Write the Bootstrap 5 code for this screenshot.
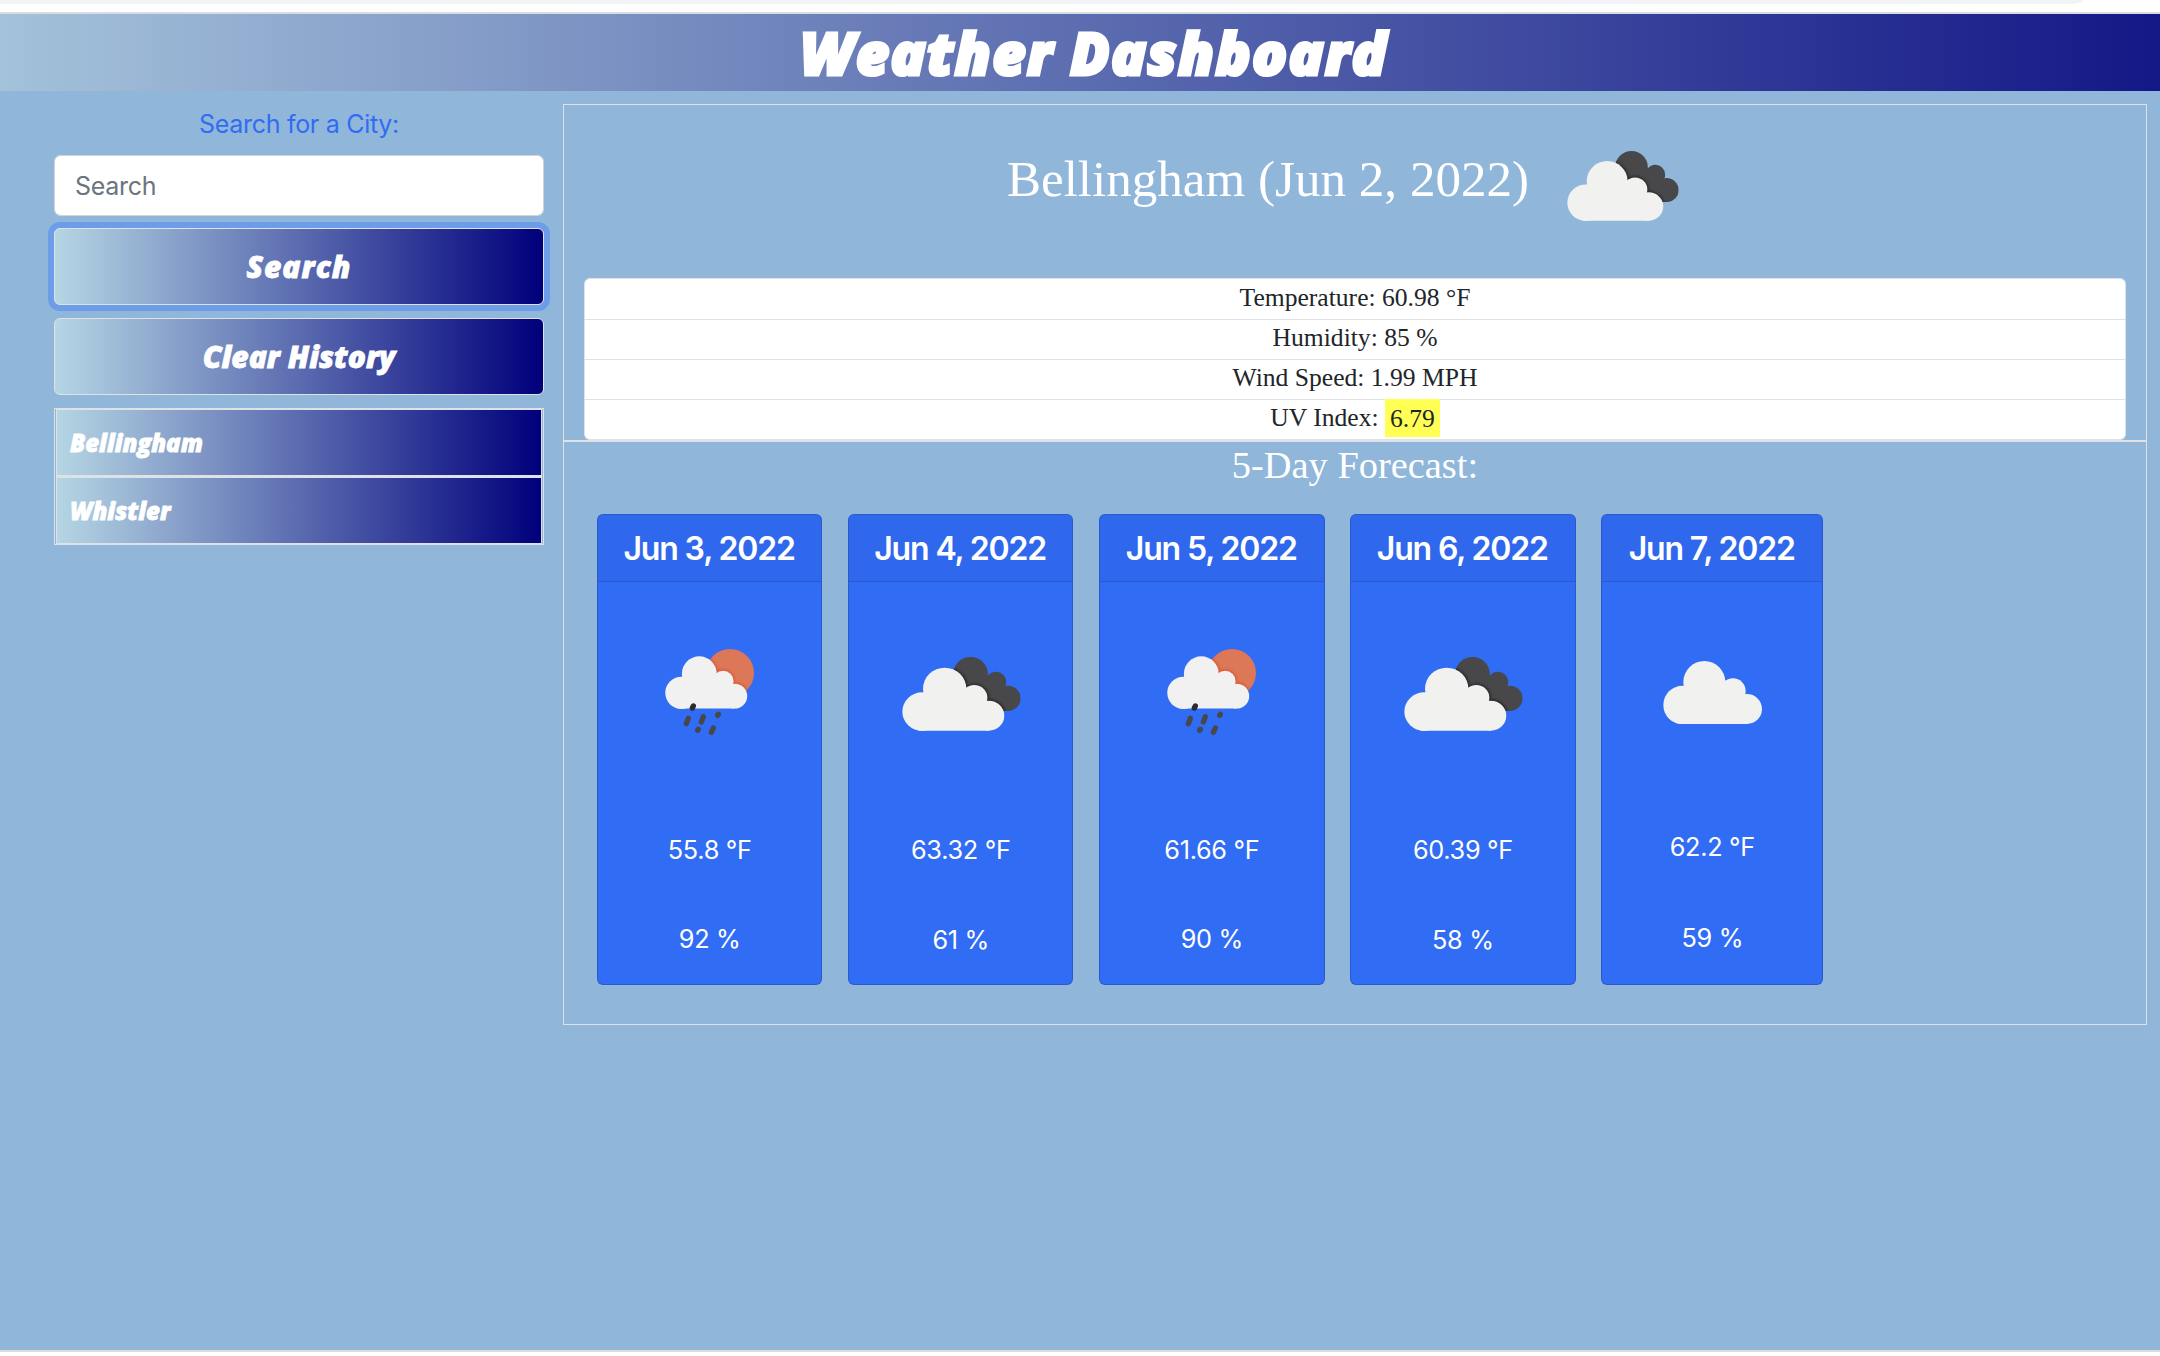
<!DOCTYPE html>
<html lang="en">
<head>
<meta charset="utf-8">
<title>Weather Dashboard</title>
<link href="https://cdn.jsdelivr.net/npm/bootstrap@5.3.0/dist/css/bootstrap.min.css" rel="stylesheet">
<style>
  :root { --edge: #dee2e6; --sky: #90b6da; --blue: #316cf4; }
  body { font-family: Inter, "Liberation Sans", sans-serif; background: #fff; height: 1356px; overflow: hidden; }
  .strip { height: 14px; border-bottom: 2px solid #dadce0; }
  .strip div { width: 2083px; height: 4px; background: #f1f3f4; border-bottom-right-radius: 14px 4px; }
  .page { height: 1338px; background: var(--sky); border-bottom: 2px solid #dadce0; }
  .racing { font-family: "Open Sans", "Liberation Sans", sans-serif; font-weight: 800; font-style: italic; color: #fff; -webkit-text-stroke: .8px #fff; }
  .banner { height: 77px; padding-left: 28px; background: linear-gradient(90deg, #b5d6e4 -12%, #00007b 114%); }
  .banner h1 { font-size: 58px; line-height: 77px; font-weight: 800; letter-spacing: 1.3px; -webkit-text-stroke: 3px #fff; }
  .side { width: 490px; margin-left: 54px; }
  .side label { font-size: 25px; line-height: 30px; letter-spacing: -.3px; color: var(--blue); margin: 18px 0 16px; }
  .side .form-control { height: 61px; padding: 0 20px; font-size: 25px; letter-spacing: -.3px; border-color: #ced4da; border-radius: 6px; }
  .side .form-control::placeholder { color: #6c757d; }
  .fade-btn { height: 77px; border: 1px solid var(--edge); border-radius: 6px; font-size: 30px; line-height: 74px; padding: 0; background: linear-gradient(90deg, #b5d6e4, #00007b); }
  .ring { box-shadow: 0 0 0 6px #6d9de9; letter-spacing: 1px; }
  .history { border: 1px solid var(--edge); padding: 0 1px 1px; border-radius: 0; height: 137px; }
  .history .list-group-item { height: 67px; line-height: 65px; padding: 0 0 0 13px; font-size: 24px; border: 1px solid var(--edge); background: linear-gradient(90deg, #b5d6e4, #00007b); }
  .history .list-group-item + .list-group-item { border-top-width: 2px; height: 68px; }
  .panel { width: 1584px; height: 921px; margin: 13px 0 0 19px; border: 1px solid var(--edge); }
  .serif { font-family: "Liberation Serif", serif; }
  .now { height: 335px; padding: 0 20px; }
  .now h2 { font-size: 51.1px; line-height: 60px; padding-top: 44px; }
  .city { height: 173px; padding-right: 24px; }
  .city svg { margin: 46px 0 0 38px; }
  .facts { border-radius: 6px; }
  .facts .list-group-item { height: 40px; line-height: 36px; padding: 0; font-size: 25.6px; border-color: var(--edge); color: #212529; }
  .facts .list-group-item:first-child { height: 42px; line-height: 38px; }
  .uv { background: #ffff54; display: inline-block; height: 38px; padding: 0 5px; line-height: 39px; vertical-align: top; margin-top: -1px; }
  .ahead { border-top: 2px solid var(--edge); padding: 0 33px; }
  .ahead h3 { font-size: 38.4px; line-height: 46px; margin: 0 0 26px; }
  .days { gap: 25.7px; }
  .day { width: 225.4px; height: 471px; background: var(--blue); border: 1px solid rgba(0,0,0,.16); border-radius: 6px; color: #fff; }
  .day.narrow { width: 222px; }
  .day .card-header { height: 67px; padding: 0; line-height: 68px; font-size: 32px; font-weight: 600; letter-spacing: -1.15px; text-indent: -1.2px; background: rgba(0,0,0,.03); border-bottom: 1px solid rgba(0,0,0,.14); }
  .sky-icon { height: 220px; padding-top: 67px; }
  .day:not(.wet) .sky-icon { padding-left: 1px; }
  .day p { font-size: 25.3px; line-height: 30px; letter-spacing: -.3px; margin: 0; }
  .day .temp { margin: 33px 0 60px; }
  .day.wet .temp { margin-bottom: 59px; }
  .day.narrow .temp { margin: 30px 0 61px; }
</style>
</head>
<body>
<svg width="0" height="0" class="position-absolute">
  <defs>
    <filter id="soft" x="-20%" y="-20%" width="140%" height="140%"><feGaussianBlur stdDeviation="5"/></filter>
    <g id="puff">
      <circle cx="59" cy="132" r="58"/><circle cx="124" cy="63" r="63"/><circle cx="210" cy="90" r="38"/><circle cx="252" cy="144" r="45"/>
      <path d="M59 100L124 60L210 90L252 120V189H48V100z"/>
    </g>
    <clipPath id="back"><circle cx="205" cy="52" r="52"/><circle cx="281" cy="75" r="31"/><circle cx="317" cy="124" r="38"/><path d="M200 50L281 65L317 110V162H200z"/></clipPath>
    <clipPath id="sun"><circle cx="195" cy="72" r="72"/></clipPath>
    <symbol id="clouds" viewBox="0 0 356 222" preserveAspectRatio="none">
      <g clip-path="url(#back)">
        <rect width="357" height="222" fill="#48484a"/>
        <use href="#puff" transform="translate(1 31) scale(1.03 1)" fill="#1c1c1c" stroke="#1c1c1c" stroke-width="3" filter="url(#soft)"/>
      </g>
      <use href="#puff" transform="translate(0 32) scale(1.03 1)" fill="#f1f1f0"/>
    </symbol>
    <symbol id="cloud" viewBox="0 0 297 189"><use href="#puff" fill="#f1f1f0"/></symbol>
    <symbol id="rain" viewBox="0 0 267 258">
      <g clip-path="url(#sun)">
        <rect width="267" height="258" fill="#dc7757"/>
        <use href="#puff" transform="translate(0 22) scale(.83)" fill="#dc5433" stroke="#dc5433" stroke-width="8" filter="url(#soft)"/>
      </g>
      <use href="#puff" transform="translate(0 22) scale(.83)" fill="#f1f1f2"/>
      <g stroke="#48484a" stroke-width="16" stroke-linecap="round">
        <path d="M85 171L82 177" stroke="#2c2c2e"/><path d="M70 208L64 224M115 203L109 219M160 196L158 199M100 241L98 244M145 237L139 250"/>
      </g>
    </symbol>
  </defs>
</svg>

<div class="strip"><div></div></div>
<div class="page">
  <header class="banner text-center"><h1 class="racing m-0">Weather Dashboard</h1></header>
  <main class="d-flex align-items-start">
    <aside class="side d-flex flex-column">
      <label class="text-center" for="city">Search for a City:</label>
      <input id="city" class="form-control" placeholder="Search">
      <button class="btn fade-btn ring racing" style="margin-top:12px">Search</button>
      <button class="btn fade-btn racing" style="margin-top:13px">Clear History</button>
      <ul class="list-group history" style="margin-top:13px">
        <li class="list-group-item racing">Bellingham</li>
        <li class="list-group-item racing">Whistler</li>
      </ul>
    </aside>
    <section class="panel">
      <div class="now serif">
        <div class="city d-flex justify-content-center align-items-start text-white">
          <h2 class="m-0 fw-normal">Bellingham (Jun 2, 2022)</h2>
          <svg width="112" height="70"><use href="#clouds"/></svg>
        </div>
        <ul class="list-group facts text-center">
          <li class="list-group-item">Temperature: 60.98 °F</li>
          <li class="list-group-item">Humidity: 85 %</li>
          <li class="list-group-item">Wind Speed: 1.99 MPH</li>
          <li class="list-group-item">UV Index: <span class="uv">6.79</span></li>
        </ul>
      </div>
      <div class="ahead">
        <h3 class="serif fw-normal text-white text-center">5-Day Forecast:</h3>
        <div class="days d-flex">
          <div class="card day wet text-center"><div class="card-header">Jun 3, 2022</div><div class="sky-icon"><svg width="89" height="86"><use href="#rain"/></svg></div><p class="temp">55.8 °F</p><p>92 %</p></div>
          <div class="card day text-center"><div class="card-header">Jun 4, 2022</div><div class="sky-icon"><svg class="mt-2" width="119" height="74"><use href="#clouds"/></svg></div><p class="temp">63.32 °F</p><p>61 %</p></div>
          <div class="card day wet text-center"><div class="card-header">Jun 5, 2022</div><div class="sky-icon"><svg width="89" height="86"><use href="#rain"/></svg></div><p class="temp">61.66 °F</p><p>90 %</p></div>
          <div class="card day text-center"><div class="card-header">Jun 6, 2022</div><div class="sky-icon"><svg class="mt-2" width="119" height="74"><use href="#clouds"/></svg></div><p class="temp">60.39 °F</p><p>58 %</p></div>
          <div class="card day narrow text-center"><div class="card-header">Jun 7, 2022</div><div class="sky-icon"><svg style="margin-top:12px" width="99" height="63"><use href="#cloud"/></svg></div><p class="temp">62.2 °F</p><p>59 %</p></div>
        </div>
      </div>
    </section>
  </main>
</div>
<script src="https://cdn.jsdelivr.net/npm/bootstrap@5.3.0/dist/js/bootstrap.bundle.min.js"></script>
</body>
</html>
